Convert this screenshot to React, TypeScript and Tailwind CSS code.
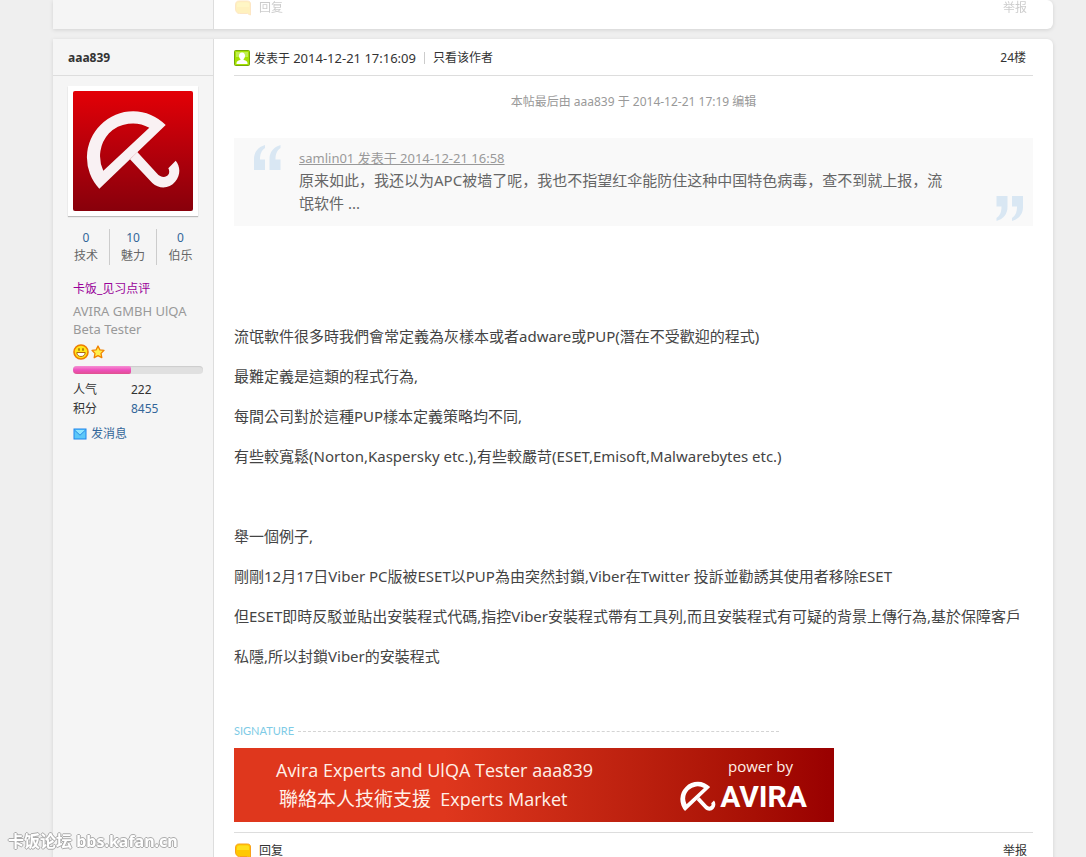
import type { ReactNode } from 'react'

const STATS = [
  { value: '0', label: '技术' },
  { value: '10', label: '魅力' },
  { value: '0', label: '伯乐' },
]

const MESSAGE = [
  '流氓軟件很多時我們會常定義為灰樣本或者adware或PUP(潛在不受歡迎的程式)',
  '最難定義是這類的程式行為,',
  '每間公司對於這種PUP樣本定義策略均不同,',
  '有些較寬鬆(Norton,Kaspersky etc.),有些較嚴苛(ESET,Emisoft,Malwarebytes etc.)',
  '',
  '舉一個例子,',
  '剛剛12月17日Viber PC版被ESET以PUP為由突然封鎖,Viber在Twitter 投訴並勸誘其使用者移除ESET',
  '但ESET即時反駁並貼出安裝程式代碼,指控Viber安裝程式帶有工具列,而且安裝程式有可疑的背景上傳行為,基於保障客戶私隱,所以封鎖Viber的安裝程式',
]

export default function App() {
  return (
    <div className="h-screen overflow-hidden bg-[#efefef] pr-[33px] pl-[53px] font-['Noto_Sans','Noto_Sans_CJK_SC',sans-serif] text-xs leading-[18px] text-[#333]">
      <Post sidebar={null}>
        <PostActions faded />
      </Post>

      <div className="h-[10px]" />

      <Post sidebar={<Profile />}>
        <header className="flex h-[37px] items-center border-b border-[#ddd] pt-0.5">
          <AuthorIcon />
          <span className="ml-1">
            发表于{' '}
            <time dateTime="2014-12-21T17:16:09" className="text-[13px]">
              2014-12-21 17:16:09
            </time>
          </span>
          <span aria-hidden className="mx-2 h-3 w-px bg-[#ccc]" />
          <a href="#author">只看该作者</a>
          <a href="#floor" className="mr-[7px] ml-auto">
            24楼
          </a>
        </header>

        <p className="mt-[17px] text-center text-[#999]">本帖最后由 aaa839 于 2014-12-21 17:19 编辑</p>

        <Quote />

        <div className="mt-[90px] font-['Noto_Sans','Noto_Sans_CJK_TC',sans-serif] text-[15px] leading-10 text-[#444]">
          {MESSAGE.map((line, i) => (
            <p key={i} className="min-h-10">
              {line}
            </p>
          ))}
        </div>

        <Signature />

        <div className="mt-[10px] border-t border-[#ddd] pt-[10px]">
          <PostActions />
        </div>
      </Post>

      <div className="pointer-events-none fixed bottom-1 left-2 text-base leading-6 font-bold text-white [text-shadow:-1px_0_#aaa,1px_0_#aaa,0_-1px_#aaa,0_1px_#aaa]">
        卡饭论坛 bbs.kafan.cn
      </div>
    </div>
  )
}

function Post({ sidebar, children }: { sidebar: ReactNode; children: ReactNode }) {
  return (
    <article className="flex rounded-r-md bg-white shadow-[0_1px_4px_rgba(0,0,0,0.12)]">
      <aside className="w-[161px] shrink-0 border-r border-[#ddd] bg-[#f5f5f5]">{sidebar}</aside>
      <div className="min-w-0 flex-1 px-5 pb-[13px]">{children}</div>
    </article>
  )
}

function PostActions({ faded = false }: { faded?: boolean }) {
  return (
    <div className={`flex h-4 items-center leading-4 ${faded ? 'opacity-25' : ''}`}>
      <button type="button" className="flex items-center gap-2">
        <ReplyIcon />
        回复
      </button>
      <button type="button" className="mr-[6px] ml-auto">
        举报
      </button>
    </div>
  )
}

function Profile() {
  return (
    <>
      <h2 className="flex h-[37px] items-center border-b border-[#ddd] pt-0.5 pl-[15px] font-bold">
        <a href="#user">aaa839</a>
      </h2>

      <div className="mt-[10px] ml-[15px] w-[130px] border-5 border-white shadow-[0_1px_1px_#bbb]">
        <div className="h-[120px] rounded-xs bg-linear-to-b from-[#e30006] to-[#88000b]">
          <Umbrella className="size-[120px] text-[#f9f1f3] drop-shadow-xs" />
        </div>
      </div>

      <ul className="mt-[13px] ml-[10px] grid w-[141px] grid-cols-3 divide-x divide-[#ccc] text-center">
        {STATS.map((s) => (
          <li key={s.label}>
            <a href="#stat" className="block text-[#336699]">
              {s.value}
            </a>
            <span className="block text-[#666]">{s.label}</span>
          </li>
        ))}
      </ul>

      <div className="mt-[15px] ml-5 w-[130px]">
        <a href="#group" className="block text-[#909]">
          卡饭_见习点评
        </a>
        <p className="mt-1 text-[13px] text-[#999]">AVIRA GMBH UlQA Beta Tester</p>
        <div className="mt-[6px] flex h-4 items-center gap-px">
          <SmileIcon />
          <StarIcon />
        </div>
        <div className="mt-[6px] h-2 overflow-hidden rounded-sm bg-[#e0e0e0] shadow-[inset_0_1px_1px_#ccc]">
          <div className="h-full w-[58px] rounded-r-xs bg-linear-to-b from-[#f58fd3] via-[#ee4fbd] to-[#e0508f]" />
        </div>
        <dl className="mt-[6px] grid grid-cols-[58px_1fr] leading-[19px]">
          <dt>人气</dt>
          <dd>222</dd>
          <dt>积分</dt>
          <dd>
            <a href="#credit" className="text-[#336699]">
              8455
            </a>
          </dd>
        </dl>
        <a href="#message" className="mt-[7px] flex items-center gap-1 text-[#336699]">
          <MailIcon />
          发消息
        </a>
      </div>
    </>
  )
}

function Quote() {
  return (
    <blockquote className="relative mt-[27px] bg-[#f9f9f9] pt-[9px] pr-[85px] pb-[11px] pl-[65px] text-[15px] leading-[23px] text-[#666]">
      <QuoteMark className="absolute top-[7px] left-5" />
      <a href="#quoted" className="block text-[13px] leading-[22px] text-[#999] underline">
        samlin01 发表于 2014-12-21 16:58
      </a>
      <p>原来如此，我还以为APC被墙了呢，我也不指望红伞能防住这种中国特色病毒，查不到就上报，流氓软件 ...</p>
      <QuoteMark className="absolute right-[10px] bottom-[5px] rotate-180" />
    </blockquote>
  )
}

function Signature() {
  return (
    <section className="mt-[46px]">
      <div className="flex h-[18px] items-center gap-1">
        <span className="font-['Lato',sans-serif] text-[11px] text-[#7ecbe6]">SIGNATURE</span>
        <span className="w-[481px] border-t border-dashed border-[#d4d4d4]" />
      </div>
      <div className="mt-2 flex h-[74px] w-[600px] justify-between bg-linear-to-r from-[#df371d] from-35% to-[#990000] pr-[27px] pl-[42px] text-[#fff0e8]">
        <div className="pt-2 font-['Open_Sans','Noto_Sans_CJK_TC',sans-serif] text-lg leading-[29px] whitespace-pre">
          <p>Avira Experts and UlQA Tester aaa839</p>
          <p className="pl-[3px]">
            <span className="text-[19px]">聯絡本人技術支援</span>
            {'  Experts Market'}
          </p>
        </div>
        <div className="pt-[7px]">
          <p className="pr-[14px] text-right font-['Open_Sans',sans-serif] text-[15px] leading-[22px]">power by</p>
          <div className="flex items-center gap-1 pt-0.5 text-white">
            <Umbrella className="size-9" tight />
            <span className="font-['Roboto',sans-serif] text-[30px] leading-9 font-bold">AVIRA</span>
          </div>
        </div>
      </div>
    </section>
  )
}

function Umbrella({ className, tight = false }: { className: string; tight?: boolean }) {
  return (
    <svg viewBox={tight ? '13 13 95 95' : '0 0 120 120'} className={className} fill="currentColor" aria-hidden>
      <path
        fillRule="evenodd"
        d="M26.3 97.7A45.5 45.5 0 0 1 27.8 33.8A45.5 45.5 0 0 1 92.7 34ZM30.3 79.7L76.3 36.7A34 34 0 0 0 36 42.2A34 34 0 0 0 30.3 79.7Z"
      />
      <path d="M57 68.3L64.3 61L83.8 82.2C87.5 86.5 92.5 87.2 95.2 83.8C96.7 81.8 96.4 79.2 95.3 77.3L102.7 69.7C107.5 75.5 107.7 84.3 102.3 90.6C96 98.3 86 98.2 79.3 92Z" />
    </svg>
  )
}

function QuoteMark({ className }: { className: string }) {
  return (
    <svg width="28" height="26" viewBox="0 0 28 26" className={className} fill="#d9e7f3" aria-hidden>
      <path d="M11 0V3C7.500 5.500 6 9 6 14.500H11V25H0V14C0 7 4 2 11 0ZM26.500 0V3C23 5.500 21.500 9 21.500 14.500H26.500V25H15.500V14C15.500 7 19.500 2 26.500 0Z" />
    </svg>
  )
}

function AuthorIcon() {
  return (
    <svg width="16" height="16" viewBox="0 0 16 16" aria-hidden>
      <rect x="0.5" y="0.5" width="15" height="15" rx="1" fill="#a5e300" stroke="#76a80a" />
      <path d="M2 2h12v5H2z" fill="#c0ee50" />
      <path
        d="M8 2.500c2 0 3 1.300 3 3.200 0 1.500-.6 2.600-1.400 3.300v1c1.800.4 3.900 1 3.900 3v1H2.500v-1c0-2 2.100-2.600 3.900-3V9C5.600 8.300 5 7.200 5 5.700c0-1.900 1-3.200 3-3.200z"
        fill="#fff"
      />
    </svg>
  )
}

function ReplyIcon() {
  return (
    <svg width="17" height="16" viewBox="0 0 17 16" aria-hidden>
      <path
        d="M5 1h8.500c2 0 3 1.200 3 3v11c-1.200-.2-2-.8-2.800-1.500H5.500C3 13.500 1.500 11.500 1.500 9V5c0-2.500 1-4 3.500-4z"
        fill="#ffc800"
        stroke="#f9a01b"
      />
      <path d="M5.500 2.500H13c1.200 0 2 .6 2 2V7H3V5c0-1.700.9-2.500 2.500-2.500z" fill="#ffdf1e" />
    </svg>
  )
}

function SmileIcon() {
  return (
    <svg width="16" height="16" viewBox="0 0 16 16" aria-hidden>
      <circle cx="8" cy="8" r="7" fill="#ffe61a" stroke="#ef7d00" strokeWidth="1.600" />
      <path d="M6 4.200v2.600M10 4.200v2.600" stroke="#8a4b00" strokeWidth="1.200" />
      <path d="M3.800 8.500h8.400c0 2.400-1.700 4-4.200 4s-4.200-1.600-4.200-4z" fill="#fff" stroke="#a85b00" strokeWidth="0.900" />
    </svg>
  )
}

function StarIcon() {
  return (
    <svg width="16" height="16" viewBox="0 0 16 16" aria-hidden>
      <path
        d="M8 2l1.900 3.900 4.100.5-3 3 .8 4.300L8 11.700l-3.800 2 .8-4.300-3-3 4.100-.5z"
        fill="#fff04a"
        stroke="#f08200"
        strokeWidth="1.300"
        strokeLinejoin="round"
      />
    </svg>
  )
}

function MailIcon() {
  return (
    <svg width="14" height="12" viewBox="0 0 14 12" aria-hidden>
      <rect x="1" y="1" width="12" height="10" fill="#5cc8f8" stroke="#1f86ee" />
      <path d="M2 2l5 5 5-5z" fill="#8fe6ff" />
      <path d="M1.500 2L7 7.200 12.500 2" fill="none" stroke="#2d8fe8" />
    </svg>
  )
}
